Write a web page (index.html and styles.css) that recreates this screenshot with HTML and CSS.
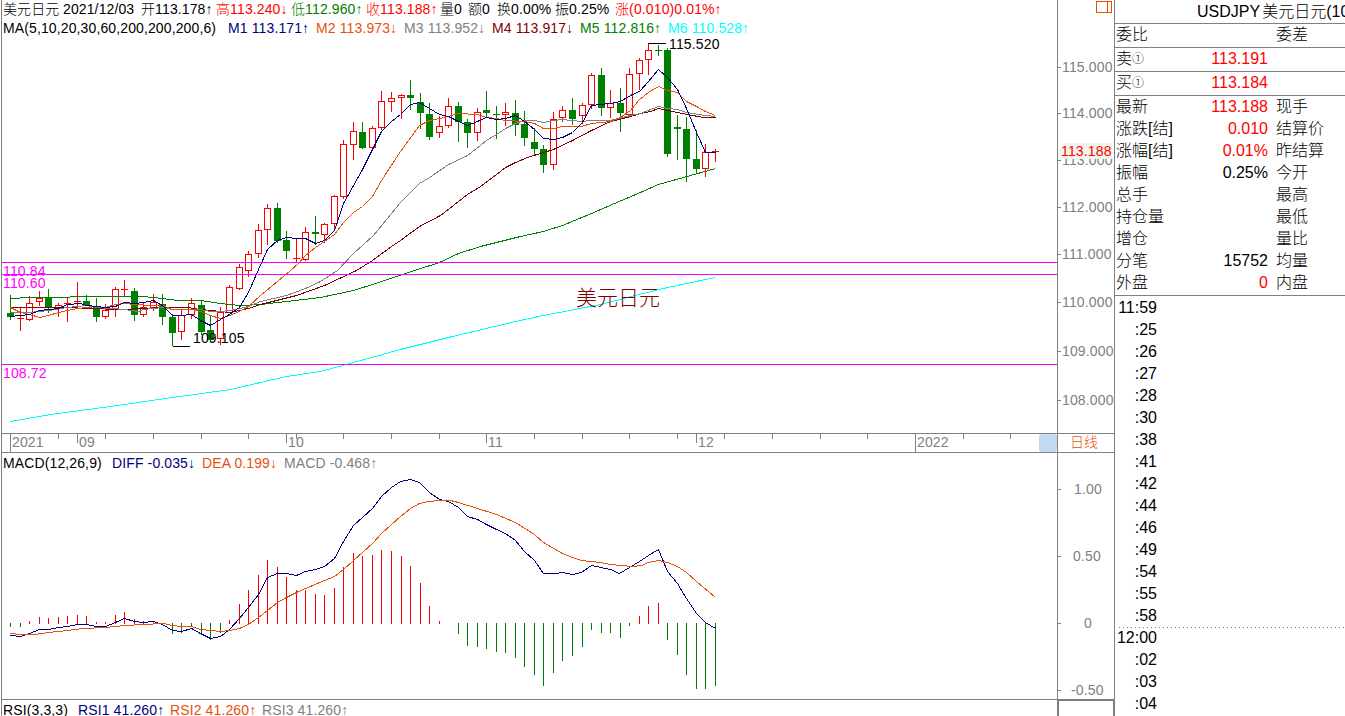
FILE: index.html
```
<!DOCTYPE html>
<html lang="zh-CN">
<head>
    <meta charset="utf-8" />
    <title>USDJPY 美元日元</title>
    <link rel="stylesheet" href="styles.css">
</head>
<body>
    <div class="content">
        <div class="charts">
            <div class="pane kline">
                <div class="info info-quote">
                    <span>美元日元</span>
                    <span>2021/12/03</span>
                    <span>开113.178↑</span>
                    <span class="red">高113.240↓</span>
                    <span class="green">低112.960↑</span>
                    <span class="red">收113.188↑</span>
                    <span>量0</span>
                    <span>额0</span>
                    <span>换0.00%</span>
                    <span>振0.25%</span>
                    <span class="red">涨(0.010)0.01%↑</span>
                </div>
                <div class="info info-ma">
                    <span>MA(5,10,20,30,60,200,200,200,6)</span>
                    <span class="navy">M1 113.171↑</span>
                    <span class="orange">M2 113.973↓</span>
                    <span class="gray">M3 113.952↓</span>
                    <span class="maroon">M4 113.917↓</span>
                    <span class="green">M5 112.816↑</span>
                    <span class="cyan">M6 110.528↑</span>
                </div>
                <svg id="kline" width="1056" height="396" viewBox="1 37 1056 396"></svg>
            </div>
            <div class="axis">
                <svg id="priceAxis" width="56" height="433" viewBox="1058 0 56 433"></svg>
            </div>

            <div class="pane timeline">
                <svg id="timeAxis" width="1056" height="18" viewBox="1 434 1056 18"></svg>
            </div>
            <div class="axis period">日线</div>

            <div class="pane macd">
                <div class="info info-macd">
                    <span>MACD(12,26,9)</span>
                    <span class="navy">DIFF -0.035↓</span>
                    <span class="orange">DEA 0.199↓</span>
                    <span class="gray">MACD -0.468↑</span>
                </div>
                <svg id="macd" width="1056" height="226" viewBox="1 473 1056 226"></svg>
            </div>
            <div class="axis">
                <svg id="macdAxis" width="56" height="246" viewBox="1058 453 56 246"></svg>
            </div>

            <div class="pane rsi">
                <div class="info info-rsi">
                    <span>RSI(3,3,3)</span>
                    <span class="navy">RSI1 41.260↑</span>
                    <span class="orange">RSI2 41.260↑</span>
                    <span class="gray">RSI3 41.260↑</span>
                </div>
            </div>
            <div class="axis rsi-axis"></div>
        </div>

        <div class="side">
            <div class="title">USDJPY 美元日元(10</div>
            <div class="row order"><label>委比</label><span></span><label>委差</label></div>
            <div class="row order"><label>卖<i>①</i></label><span class="red">113.191</span></div>
            <div class="row order"><label>买<i>①</i></label><span class="red">113.184</span></div>
            <div class="quote">
                <div class="row"><label>最新</label><span class="red">113.188</span><label>现手</label></div>
                <div class="row"><label>涨跌[结]</label><span class="red">0.010</span><label>结算价</label></div>
                <div class="row"><label>涨幅[结]</label><span class="red">0.01%</span><label>昨结算</label></div>
                <div class="row"><label>振幅</label><span>0.25%</span><label>今开</label></div>
                <div class="row"><label>总手</label><span></span><label>最高</label></div>
                <div class="row"><label>持仓量</label><span></span><label>最低</label></div>
                <div class="row"><label>增仓</label><span></span><label>量比</label></div>
                <div class="row"><label>分笔</label><span>15752</span><label>均量</label></div>
                <div class="row"><label>外盘</label><span class="red">0</span><label>内盘</label></div>
            </div>
            <ul class="ticks">
                <li>11:59</li>
                <li>:25</li>
                <li>:26</li>
                <li>:27</li>
                <li>:28</li>
                <li>:30</li>
                <li>:38</li>
                <li>:41</li>
                <li>:42</li>
                <li>:44</li>
                <li>:46</li>
                <li>:49</li>
                <li>:54</li>
                <li>:55</li>
                <li>:58</li>
                <li class="minute">12:00</li>
                <li>:02</li>
                <li>:03</li>
                <li>:04</li>
            </ul>
        </div>
    </div>
    <script src="script.js"></script>
</body>
</html>
```
FILE: styles.css
```
* {
    margin: 0;
    padding: 0;
    box-sizing: border-box;
}

html, body {
    width: 100%;
    height: 100%;
    overflow: hidden;
}

body {
    background: #fff;
    color: #000;
    font-family: "Liberation Sans", "Noto Sans CJK SC", sans-serif;
    font-size: 14px;
    font-weight: 300;
}

svg {
    display: block;
}

.content {
    display: flex;
    height: 716px;
}

.red { color: #ff0000; }
.green { color: #008000; }
.navy { color: #000080; }
.orange { color: #e6500a; }
.gray { color: #808080; }
.maroon { color: #800000; }
.cyan { color: #00ffff; }

/* charts */
.charts {
    flex: none;
    display: grid;
    grid-template-columns: 1056px 57px;
    grid-template-rows: 434px 19px 247px 16px;
    width: 1115px;
    padding-left: 1px;
    border-right: 1px solid #808080;
}

.pane {
    border-left: 1px solid #808080;
    border-bottom: 1px solid #808080;
    overflow: hidden;
}

    .pane svg {
        margin-left: -1px;
    }

.axis {
    border-left: 1px solid #808080;
    border-bottom: 1px solid #808080;
    overflow: hidden;
}

.info {
    display: grid;
    height: 18px;
    line-height: 18px;
    padding-left: 1px;
    letter-spacing: 0.12px;
    white-space: nowrap;
}

.info-quote {
    height: 19px;
    line-height: 19px;
    grid-template-columns: 60px 78px 75px 75px 75px 74px 28px 29px 58px 60px 120px;
}

.info-ma {
    grid-template-columns: 225px 88px 88px 88px 88px 88px 88px;
}

.info-macd {
    height: 20px;
    line-height: 20px;
    grid-template-columns: 109px 90px 82px 120px;
}

.info-rsi {
    line-height: 20px;
    grid-template-columns: 75px 92px 92px 92px;
}

.period {
    padding-left: 12px;
    line-height: 17px;
    color: #e6500a;
}

.rsi, .rsi-axis {
    border-bottom: none;
}

.rsi-axis {
    border: 2px solid #808080;
    border-width: 1px 1px 0 2px;
}

/* svg pieces */
.k, .line, .tick, .icon, .level {
    fill: none;
    shape-rendering: crispEdges;
}

.k.up { stroke: #ff0000; }
.k.down { stroke: #008000; }
rect.k.up { fill: #fff; }
rect.k.down { fill: #008000; }

.tick { stroke: #808080; }
.level { stroke: #ff00ff; }
.icon { stroke: #e6500a; }
.mark { stroke: #000; }

svg text {
    font-size: 14px;
    letter-spacing: 0.15px;
    fill: #808080;
}

svg .level-text { fill: #ff00ff; }
svg .mark-text { fill: #000; }
svg .now { fill: #ff0000; }

svg .name {
    font-size: 21px;
    letter-spacing: 0;
    fill: #800000;
}

/* right side */
.side {
    flex: 1;
    overflow: hidden;
    font-size: 16px;
    white-space: nowrap;
}

.title {
    height: 24px;
    line-height: 23px;
    padding-left: 82px;
    word-spacing: -2px;
    border-bottom: 1px solid #808080;
}

.row {
    display: grid;
    grid-template-columns: 70px 81px 70px;
    column-gap: 1px;
    height: 22px;
    line-height: 22px;
    padding-left: 1px;
}

    .row span {
        text-align: right;
    }

    .row label + span + label {
        padding-left: 7px;
    }

    .row i {
        font-size: 12px;
        font-style: normal;
        vertical-align: 1px;
    }

.order {
    height: 24px;
    border-bottom: 1px solid #808080;
}

.quote {
    height: 200px;
    border-bottom: 1px solid #808080;
}

.ticks {
    list-style: none;
}

    .ticks li {
        height: 22px;
        line-height: 23px;
        padding-right: 188px;
        text-align: right;
    }

    .ticks .minute {
        background: repeating-linear-gradient(90deg, #808080 0, #808080 1px, #fff 1px, #fff 4px) 4px 1px / 100% 1px no-repeat;
    }
```
FILE: script.js
```
var NS = "http://www.w3.org/2000/svg";

// up(1)/down(0), high, body top, body bottom, low
var candles = [
    [0,295,313,317,320],[1,307,318,319,331],[1,296,303,320,321],[1,291,298,302,306],[0,289,297,308,313],
    [1,303,305,309,317],[1,298,303,304,322],[1,282,301,302,308],[0,295,301,305,306],[0,298,306,317,322],
    [1,304,310,317,319],[1,287,289,309,317],[1,280,289,290,296],[0,288,291,315,321],[1,303,307,315,317],
    [1,294,302,308,311],[0,294,304,317,325],[0,314,317,333,346],[1,309,315,332,340],[1,298,303,315,319],
    [0,300,305,332,335],[0,315,330,340,342],[1,307,312,339,345],[1,285,287,313,313],[1,264,267,289,290],
    [1,251,254,271,277],[1,224,230,254,258],[1,204,208,230,245],[0,203,208,241,243],[0,231,240,251,259],
    [1,238,258,259,262],[1,227,232,260,261],[0,216,232,234,245],[1,223,224,235,243],[1,195,196,224,230],
    [1,140,144,197,199],[1,122,131,145,160],[0,122,132,148,149],[1,126,128,148,149],[1,91,101,128,130],
    [1,92,98,102,112],[1,94,95,98,119],[0,80,95,98,110],[0,93,102,113,129],[0,103,114,137,140],
    [1,116,126,133,138],[1,98,106,126,128],[0,102,106,122,142],[0,119,122,133,148],[1,108,112,133,141],
    [0,91,110,113,118],[0,106,114,115,139],[1,103,112,115,126],[0,100,113,125,136],[0,111,124,138,146],
    [0,128,142,149,156],[0,145,149,165,173],[1,112,119,165,170],[1,106,110,118,122],[0,98,110,119,125],
    [1,103,105,116,124],[1,73,75,105,109],[0,68,75,108,116],[1,90,103,108,118],[0,88,103,113,132],
    [1,68,74,115,116],[1,58,60,74,90],[1,43,50,60,75],[0,45,50,51,56],[0,48,50,154,157],
    [0,115,127,129,160],[0,117,129,159,182],[0,130,159,169,174],[1,144,152,169,177],[1,149,151,152,162]
];

var ma = {
    "#00ffff": "10,421 50,414 110,406 172,397 230,389 286,376 320,371 353,362 400,349 448,337 515,321 543,315 600,304 658,289 686,283 715,277",
    "#008000": "10,298 29,297 57,297 83,296 143,296 162,298 177,300 200,300 220,303 239,305 260,304 286,301 320,297 353,290 372,284 414,270 439,262 458,253 480,246 520,236 543,231 562,225 591,213 621,200 640,192 658,184 683,177 715,168",
    "#800000": "10,307 67,307 86,308 124,309 143,308 162,307 187,307 200,309 210,310 220,311 229,312 239,310 248,308 260,304 296,295 324,285 356,270 372,260 391,246 400,240 419,226 440,215 458,201 467,194 480,186 496,174 505,167 515,162 527,157 543,152 553,149 572,140 591,130 610,121 630,116 640,113 650,111 658,108 667,110 677,112 687,114 703,117 715,117",
    "#808080": "10,312 29,312 48,310 67,307 86,305 96,307 124,309 138,311 143,309 162,307 172,309 200,309 210,311 220,311 229,310 239,308 248,306 260,301 286,295 305,288 320,281 337,270 353,253 373,235 400,202 419,183 429,177 448,164 467,155 480,145 486,140 496,134 505,128 515,123 524,120 534,120 543,122 553,120 562,119 581,121 591,120 610,120 630,115 640,113 658,106 667,108 677,109 686,112 705,115 715,116",
    "#e6500a": "10,307 20,312 29,314 39,317 48,315 58,312 67,310 77,308 96,306 105,307 115,304 124,303 134,304 153,305 162,305 172,309 191,309 200,311 210,315 220,318 229,315 239,311 248,306 260,295 277,281 290,270 298,263 305,255 315,247 324,241 334,234 343,222 353,212 362,206 372,196 381,180 400,151 419,125 429,120 439,118 448,116 457,113 477,114 486,117 496,118 505,120 524,121 534,123 543,128 553,128 562,126 581,126 591,123 610,121 620,117 630,110 639,99 648,92 658,86 667,90 677,92 686,101 696,106 705,111 715,115",
    "#000080": "10,316 29,314 39,310 58,308 67,304 80,303 86,305 96,306 105,307 115,306 124,302 134,303 143,302 153,300 162,305 172,315 181,315 191,314 200,320 210,325 220,319 229,314 239,307 248,292 258,269 267,249 277,240 286,237 296,238 305,238 315,243 324,240 334,230 343,203 362,169 372,149 381,131 391,121 400,114 410,104 419,102 429,108 439,114 448,116 458,121 467,125 477,121 486,117 496,119 505,118 515,115 524,121 534,129 543,138 553,139 562,137 572,132 582,122 591,105 600,104 610,103 620,101 630,95 639,91 648,81 658,69 667,77 677,89 686,108 696,132 705,152 715,152"
};

// histogram ends, zero line is 623
var hist = [
    627,627,621,617,618,617,616,615,616,622,622,615,612,619,621,621,624,634,633,627,633,640,633,620,604,
    590,575,560,567,577,590,590,594,595,588,567,553,556,555,550,551,556,566,583,606,621,623,634,646,647,
    649,652,653,658,667,675,686,673,661,656,647,630,633,633,638,626,616,606,603,640,655,675,689,689,686
];

var macd = {
    "#000080": "10,635 20,636 29,633 39,629 48,629 58,627 67,626 77,624 86,624 96,626 105,626 115,622 124,618 134,621 143,622 153,621 162,624 172,630 181,631 191,628 200,633 210,638 220,636 229,629 239,618 248,607 258,594 267,577 277,573 286,573 296,575 305,571 315,569 324,566 334,558 343,541 353,525 372,508 381,496 391,487 400,481 410,479 419,482 429,492 439,499 448,501 458,507 467,516 477,519 486,524 496,529 505,533 515,540 524,551 534,560 543,573 555,573 562,572 572,574 581,572 591,565 610,569 619,573 629,567 639,561 648,555 658,549 667,571 677,583 686,598 696,613 705,622 715,628",
    "#e6500a": "10,633 20,634 34,634 48,632 67,630 82,628 105,627 124,625 143,624 163,623 172,625 181,626 191,626 200,629 210,630 220,631 229,630 239,628 248,624 258,617 267,610 277,602 286,597 296,592 305,588 324,580 334,576 343,569 353,560 372,543 381,533 400,516 410,508 419,503 428,501 439,500 450,500 458,502 477,508 496,514 515,522 534,534 543,542 562,553 572,557 581,560 600,562 610,564 632,566 641,565 648,562 658,560 667,562 677,566 686,572 696,581 715,597"
};

function f_x(i) {
    return Math.round(10 + i * 9.525);
}

function f_add(id, tag, attrs, text) {
    var el = document.createElementNS(NS, tag);
    for (var k in attrs) {
        el.setAttribute(k, attrs[k]);
    }
    if (text) {
        el.textContent = text;
    }
    document.getElementById(id).appendChild(el);
}

function f_line(id, cls, x1, y1, x2, y2) {
    f_add(id, "path", { "class": cls, d: "M" + x1 + " " + y1 + "L" + x2 + " " + y2 });
}

function f_text(id, cls, x, y, text) {
    f_add(id, "text", { "class": cls, x: x, y: y }, text);
}

function f_curves(id, data) {
    for (var color in data) {
        f_add(id, "polyline", { "class": "line", stroke: color, points: data[color], transform: "translate(0.5 0.5)" });
    }
}

function f_drawKline() {
    candles.forEach(function (c, i) {
        var x = f_x(i);
        var cls = "k " + (c[0] ? "up" : "down");
        f_line("kline", cls, x + 0.5, c[1], x + 0.5, c[4]);
        if (c[3] - c[2] <= 1) {
            f_line("kline", cls, x - 3, c[2] + 0.5, x + 4, c[2] + 0.5);
        } else {
            f_add("kline", "rect", { "class": cls, x: x - 2.5, y: c[2] + 0.5, width: 6, height: c[3] - c[2] - 1 });
        }
    });
    f_curves("kline", ma);

    [[262, "110.84", 276], [274, "110.60", 288], [364, "108.72", 378]].forEach(function (l) {
        f_line("kline", "level", 2, l[0] + 0.5, 1057, l[0] + 0.5);
        f_text("kline", "level-text", 3, l[2], l[1]);
    });

    f_line("kline", "k mark", 648, 43.5, 666, 43.5);
    f_text("kline", "mark-text", 669, 49, "115.520");
    f_line("kline", "k mark", 173, 346.5, 190, 346.5);
    f_text("kline", "mark-text", 193, 343, "109.105");
    f_text("kline", "name", 576, 305, "美元日元");
}

function f_drawPriceAxis() {
    [67, 113, 160, 207, 254, 302, 351, 400].forEach(function (y, i) {
        f_line("priceAxis", "tick", 1058, y + 0.5, 1061, y + 0.5);
        f_text("priceAxis", "", 1062, y + 5, (115 - i) + ".000");
    });
    f_add("priceAxis", "path", { d: "M1058 152l5-9h49v16h-49z", fill: "#f0f5eb" });
    f_text("priceAxis", "now", 1061, 156, "113.188");
    f_add("priceAxis", "path", { "class": "icon", d: "M1096.5 1.5h15v11h-15zM1107.5 1.5v11" });
}

function f_drawTimeAxis() {
    for (var i = 5; i <= 105; i += 5) {
        f_line("timeAxis", "tick", f_x(i) + 0.5, 434, f_x(i) + 0.5, 439);
    }
    [10, 915].forEach(function (x) {
        f_line("timeAxis", "tick", x + 0.5, 434, x + 0.5, 452);
    });
    [77, 286, 486, 696].forEach(function (x) {
        f_line("timeAxis", "tick", x + 0.5, 434, x + 0.5, 443);
    });
    [[12, "2021"], [79, "09"], [288, "10"], [488, "11"], [698, "12"], [917, "2022"]].forEach(function (t) {
        f_text("timeAxis", "", t[0], 447, t[1]);
    });
    f_add("timeAxis", "rect", { x: 1039, y: 434, width: 18, height: 18, rx: 3, fill: "#c3daf5" });
}

function f_drawMacd() {
    hist.forEach(function (y, i) {
        if (y != 623) {
            f_line("macd", y < 623 ? "k up" : "k down", f_x(i) + 0.5, y < 623 ? 624 : 623, f_x(i) + 0.5, y);
        }
    });
    f_curves("macd", macd);

    [[489, 1074, "1.00"], [556, 1073, "0.50"], [623, 1084, "0"], [690, 1071, "-0.50"]].forEach(function (t) {
        f_line("macdAxis", "tick", 1058, t[0] + 0.5, 1061, t[0] + 0.5);
        f_text("macdAxis", "", t[1], t[0] + 5, t[2]);
    });
}

f_drawKline();
f_drawPriceAxis();
f_drawTimeAxis();
f_drawMacd();
```
